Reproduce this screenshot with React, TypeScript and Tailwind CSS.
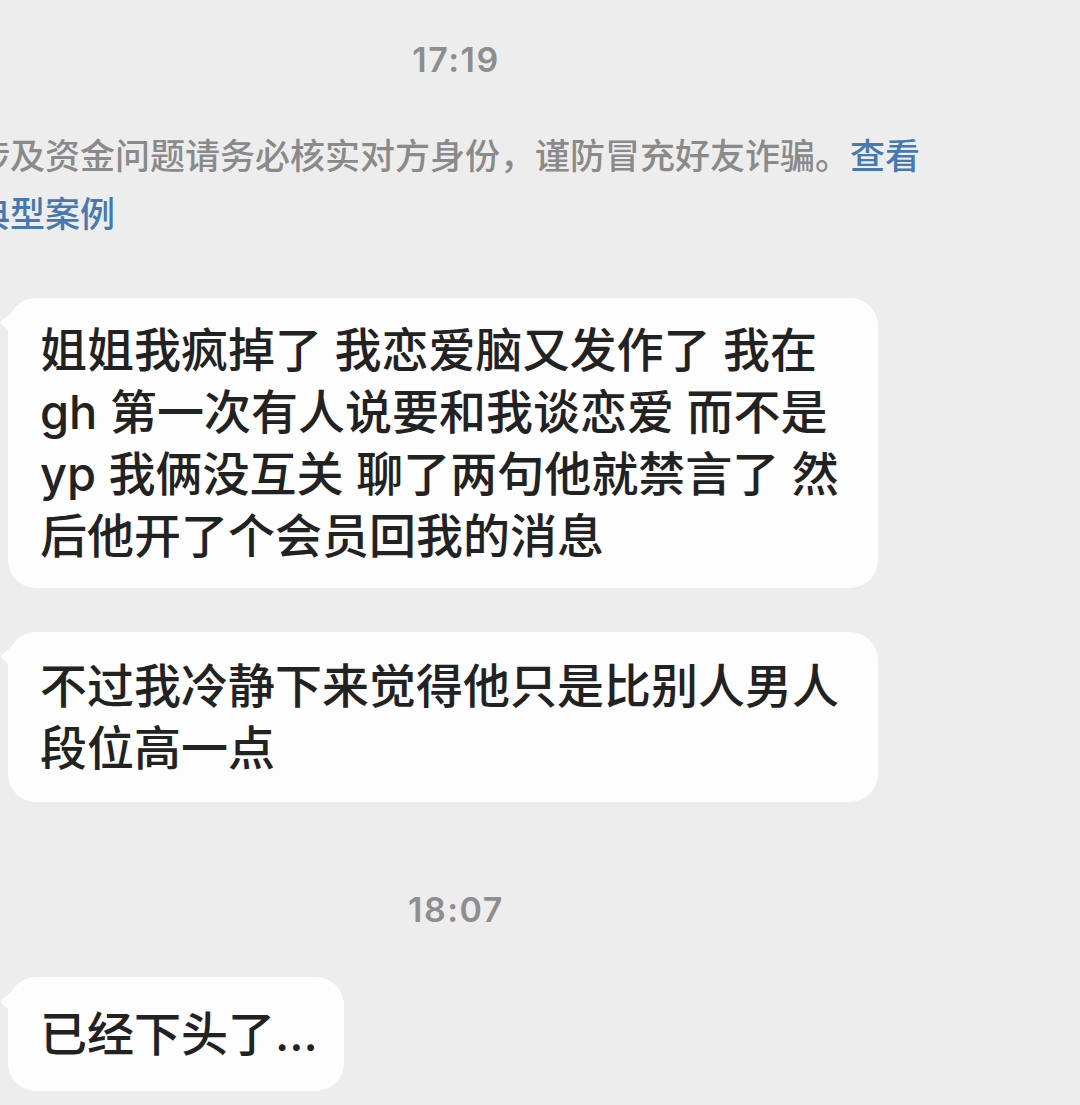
import React from "react";

const Tail = () => (
  <svg
    className="absolute left-[-8px] top-[14px]"
    width="12"
    height="26"
    viewBox="0 0 12 26"
  >
    <path d="M12 0 C8 4 4 7 1.5 9 Q0 10.5 1.5 12 C4 14.5 8 18 12 22 Z" fill="#fdfdfd" />
  </svg>
);

const Bubble = ({
  lines,
  className = "",
}: {
  lines: string[];
  className?: string;
}) => (
  <div
    className={`relative ml-[8px] rounded-[28px] bg-[#fdfdfd] pl-[32px] text-[47px] font-medium leading-[62px] text-[#222222] ${className}`}
  >
    <Tail />
    {lines.map((l, i) => (
      <div key={i} className="whitespace-pre">
        {l}
      </div>
    ))}
  </div>
);

const TimeStamp = ({ t, className = "" }: { t: string; className?: string }) => (
  <div
    className={`w-[912px] text-center text-[34px] font-semibold leading-[40px] tracking-[1.5px] text-[#8e8e8e] ${className}`}
  >
    {t}
  </div>
);

export default function App() {
  return (
    <div className="h-[1105px] w-[1080px] overflow-hidden bg-[#ededed] pt-[40px] font-['Inter','Noto_Sans_CJK_SC',sans-serif]">
      <TimeStamp t="17:19" />

      {/* safety notice */}
      <div className="ml-[-25px] mt-[47px] w-[1000px] text-[35px] font-medium leading-[58px] text-[#8a8a8a]">
        <div className="whitespace-nowrap">
          涉及资金问题请务必核实对方身份，谨防冒充好友诈骗。
          <span className="text-[#4679b0]">查看</span>
        </div>
        <div className="text-[#4679b0]">典型案例</div>
      </div>

      <Bubble
        className="mt-[55px] w-[870px] pb-[21px] pt-[21px]"
        lines={[
          "姐姐我疯掉了 我恋爱脑又发作了 我在",
          "gh 第一次有人说要和我谈恋爱 而不是",
          "yp 我俩没互关 聊了两句他就禁言了 然",
          "后他开了个会员回我的消息",
        ]}
      />

      <Bubble
        className="mt-[44px] w-[870px] pb-[23px] pt-[23px]"
        lines={["不过我冷静下来觉得他只是比别人男人", "段位高一点"]}
      />

      <TimeStamp t="18:07" className="mt-[88px]" />

      <div className="mt-[47px]">
        <Bubble
          className="inline-block pb-[26px] pr-[26px] pt-[26px]"
          lines={["已经下头了..."]}
        />
      </div>
    </div>
  );
}
